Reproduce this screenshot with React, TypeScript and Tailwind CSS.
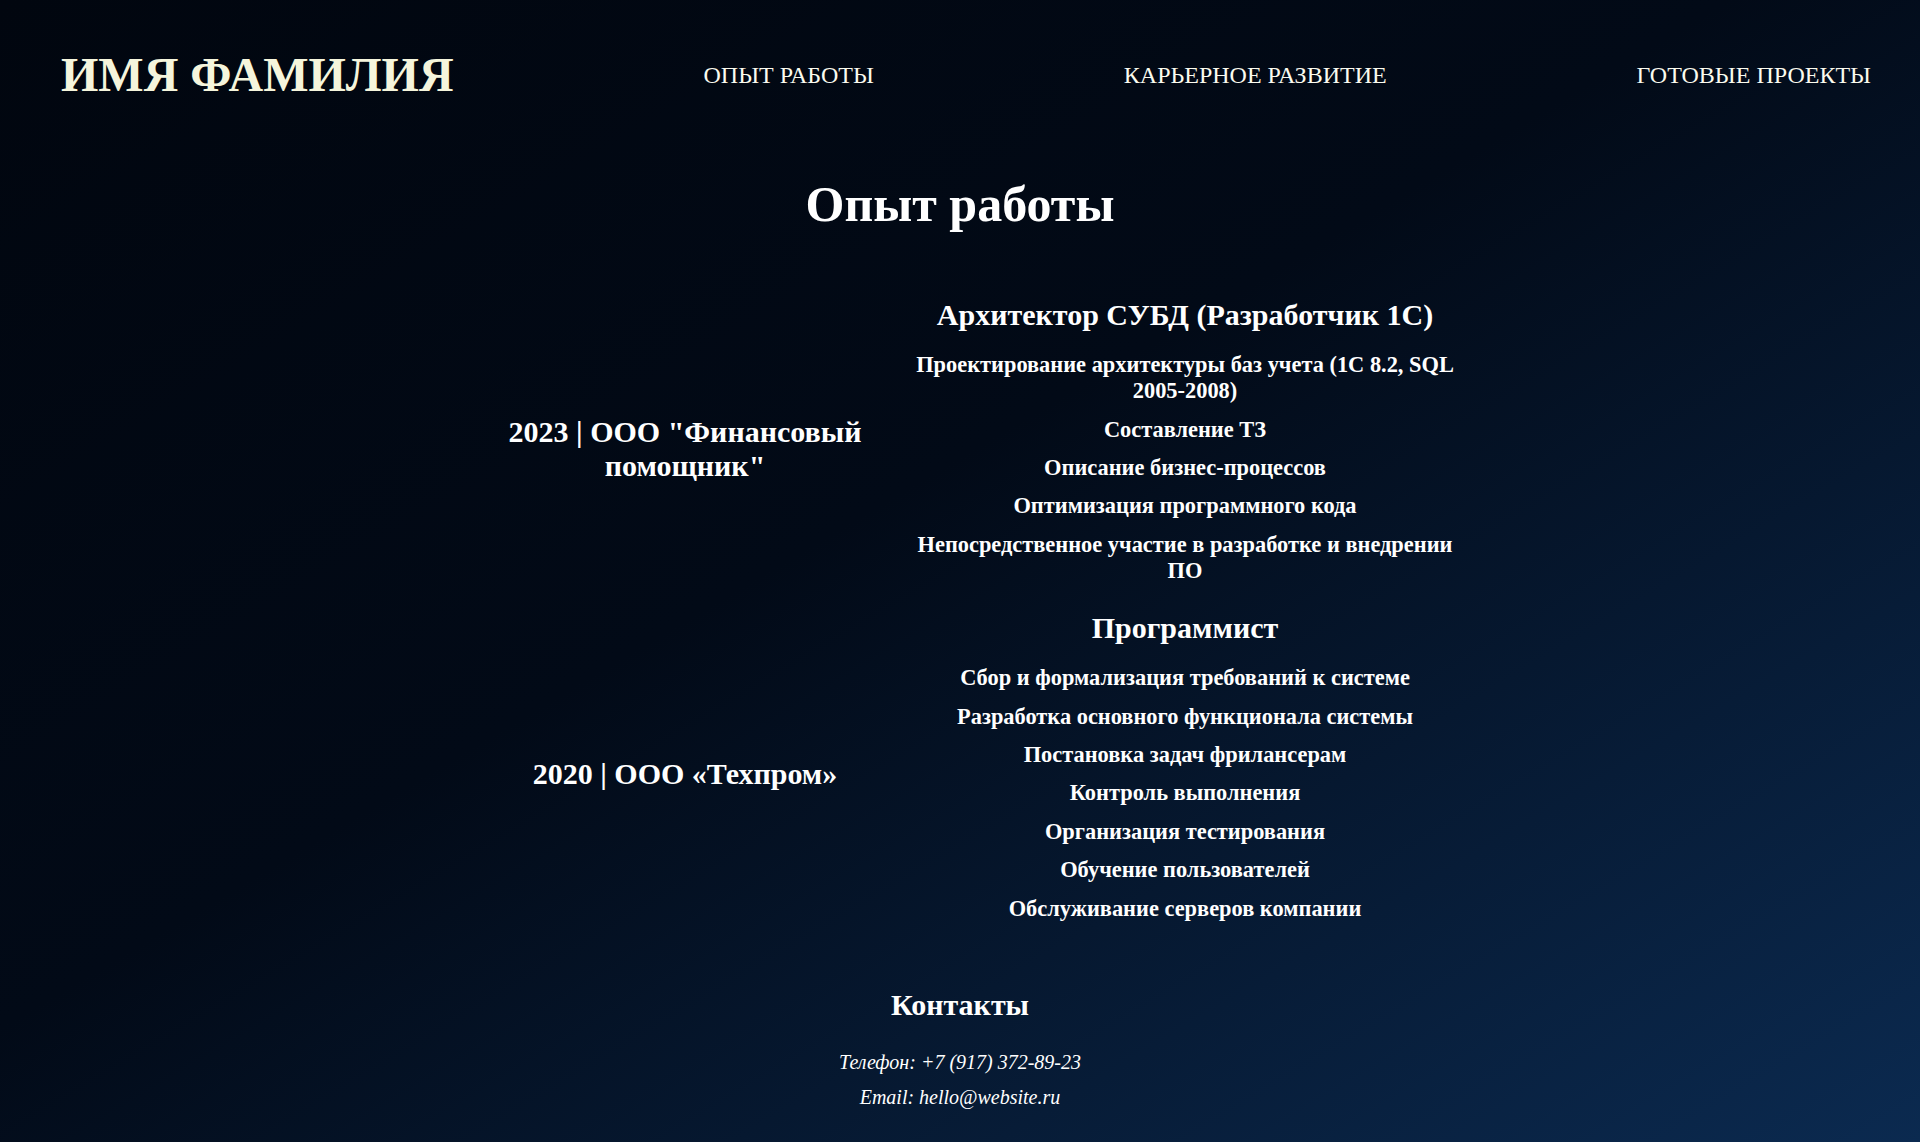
const jobs = [
  {
    company: '2023 | ООО "Финансовый помощник"',
    title: 'Архитектор СУБД (Разработчик 1С)',
    duties: [
      'Проектирование архитектуры баз учета (1С 8.2, SQL 2005-2008)',
      'Составление ТЗ',
      'Описание бизнес-процессов',
      'Оптимизация программного кода',
      'Непосредственное участие в разработке и внедрении ПО',
    ],
  },
  {
    company: '2020 | ООО «Техпром»',
    title: 'Программист',
    duties: [
      'Сбор и формализация требований к системе',
      'Разработка основного функционала системы',
      'Постановка задач фрилансерам',
      'Контроль выполнения',
      'Организация тестирования',
      'Обучение пользователей',
      'Обслуживание серверов компании',
    ],
  },
]

export default function App() {
  return (
    <div className="min-h-[1142px] w-full bg-[linear-gradient(to_bottom_right,#01060f_0%,#020a17_45%,#0b2a50_100%)] font-['Liberation_Serif','Times_New_Roman',serif] text-white">
      {/* Header */}
      <header className="flex items-center justify-between pl-[61px] pr-[49px] pt-[47px]">
        <p className="text-[48px] font-bold leading-[1.15] text-[#f5f5dc]">ИМЯ ФАМИЛИЯ</p>
        <a className="text-[24px] text-[#fbfbef]">ОПЫТ РАБОТЫ</a>
        <a className="text-[24px] text-[#fbfbef]">КАРЬЕРНОЕ РАЗВИТИЕ</a>
        <a className="text-[24px] text-[#fbfbef]">ГОТОВЫЕ ПРОЕКТЫ</a>
      </header>

      <main className="flex flex-col items-center">
        <h1 className="mt-[74px] text-[50px] font-bold leading-[1.15]">Опыт работы</h1>

        <div className="mt-[64px] flex w-[1000px] flex-col gap-[27px]">
          {jobs.map((job) => (
            <div key={job.company} className="grid grid-cols-[450px_550px] items-center">
              <h2 className="px-[30px] pt-[17px] text-center text-[30px] font-bold leading-[1.15]">{job.company}</h2>
              <div className="flex flex-col items-center text-center">
                <h3 className="mb-[20px] text-[30px] font-bold leading-[1.15]">{job.title}</h3>
                <ul className="flex flex-col gap-[12.4px]">
                  {job.duties.map((d) => (
                    <li key={d} className="text-[22.4px] font-bold leading-[26px]">{d}</li>
                  ))}
                </ul>
              </div>
            </div>
          ))}
        </div>

        {/* Contacts */}
        <footer className="mt-[66px] flex flex-col items-center pb-[30px]">
          <h2 className="text-[30px] font-bold leading-[1.15]">Контакты</h2>
          <p className="mt-[29px] text-[20px] italic leading-[1.15]">Телефон: +7 (917) 372-89-23</p>
          <p className="mt-[12px] text-[20px] italic leading-[1.15]">Email: hello@website.ru</p>
        </footer>
      </main>
    </div>
  )
}
